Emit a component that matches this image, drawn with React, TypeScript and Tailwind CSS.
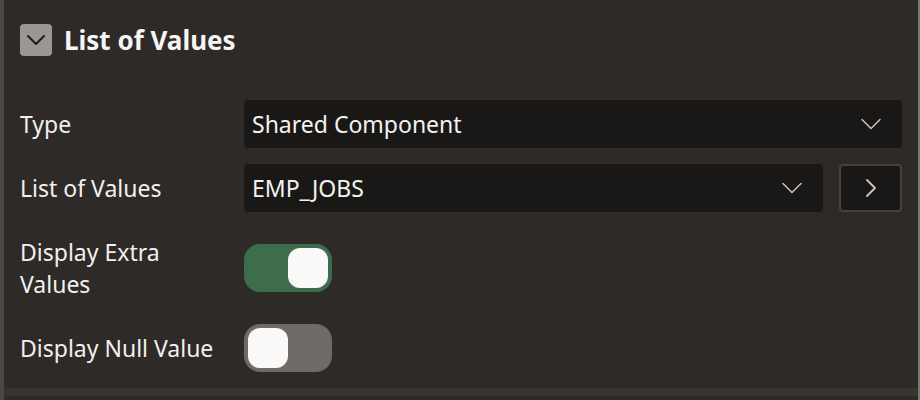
import { ChevronDown, ChevronRight } from 'lucide-react';

function Toggle({ on }: { on: boolean }) {
  return (
    <button
      className={
        on
          ? 'w-[88px] h-12 rounded-[16px] bg-[#3e6d4e] flex items-center justify-end px-1'
          : 'w-[88px] h-12 rounded-[16px] bg-[#6e6a66] flex items-center justify-start px-1'
      }
    >
      <span className="w-10 h-10 rounded-[12px] bg-[#fbf9f8]" />
    </button>
  );
}

function Select({ value }: { value: string }) {
  return (
    <div className="flex-1 h-12 rounded bg-[#1a1816] flex items-center justify-between pl-2 pr-[13px]">
      <span className="text-[23px] text-[#f4f2f0]">{value}</span>
      <ChevronDown className="w-9 h-9 text-[#c8c4c0]" strokeWidth={1} />
    </div>
  );
}

export default function App() {
  return (
    <div
      className="w-[920px] h-[400px] bg-[#2d2a27] border-l-4 border-l-[#4a4744] border-r-2 border-r-[#7a7773] flex flex-col overflow-hidden"
      style={{ fontFamily: '"Noto Sans", "Open Sans", sans-serif' }}
    >
      {/* Header */}
      <div className="flex items-center gap-3 pl-4 pt-6 h-[56px]">
        <button className="w-8 h-8 rounded bg-[#9c9792] flex items-center justify-center">
          <ChevronDown className="w-8 h-8 text-[#1f1d1b]" strokeWidth={1.5} />
        </button>
        <h2 className="text-[26px] font-bold text-[#f7f5f3] leading-none">List of Values</h2>
      </div>

      {/* Fields */}
      <div className="flex flex-col gap-4 pl-4 pr-4 pt-11">
        <div className="flex items-center">
          <label className="w-[224px] text-[23px] text-[#f2f0ee]">Type</label>
          <Select value="Shared Component" />
        </div>
        <div className="flex items-center gap-4">
          <label className="w-[208px] text-[23px] text-[#f2f0ee]">List of Values</label>
          <Select value="EMP_JOBS" />
          <button className="w-[63px] h-12 rounded border-2 border-[#45413d] bg-[#1a1816] flex items-center justify-center">
            <ChevronRight className="w-8 h-8 text-[#c8c4c0]" strokeWidth={1.4} />
          </button>
        </div>
        <div className="flex items-center pt-2">
          <label className="w-[224px] text-[23px] leading-[32px] text-[#f2f0ee]">
            Display Extra
            <br />
            Values
          </label>
          <Toggle on />
        </div>
        <div className="flex items-center pt-2">
          <label className="w-[224px] text-[23px] text-[#f2f0ee]">Display Null Value</label>
          <Toggle on={false} />
        </div>
      </div>

      <div className="mt-auto mb-1 h-2 bg-[#38342f]" />
    </div>
  );
}
